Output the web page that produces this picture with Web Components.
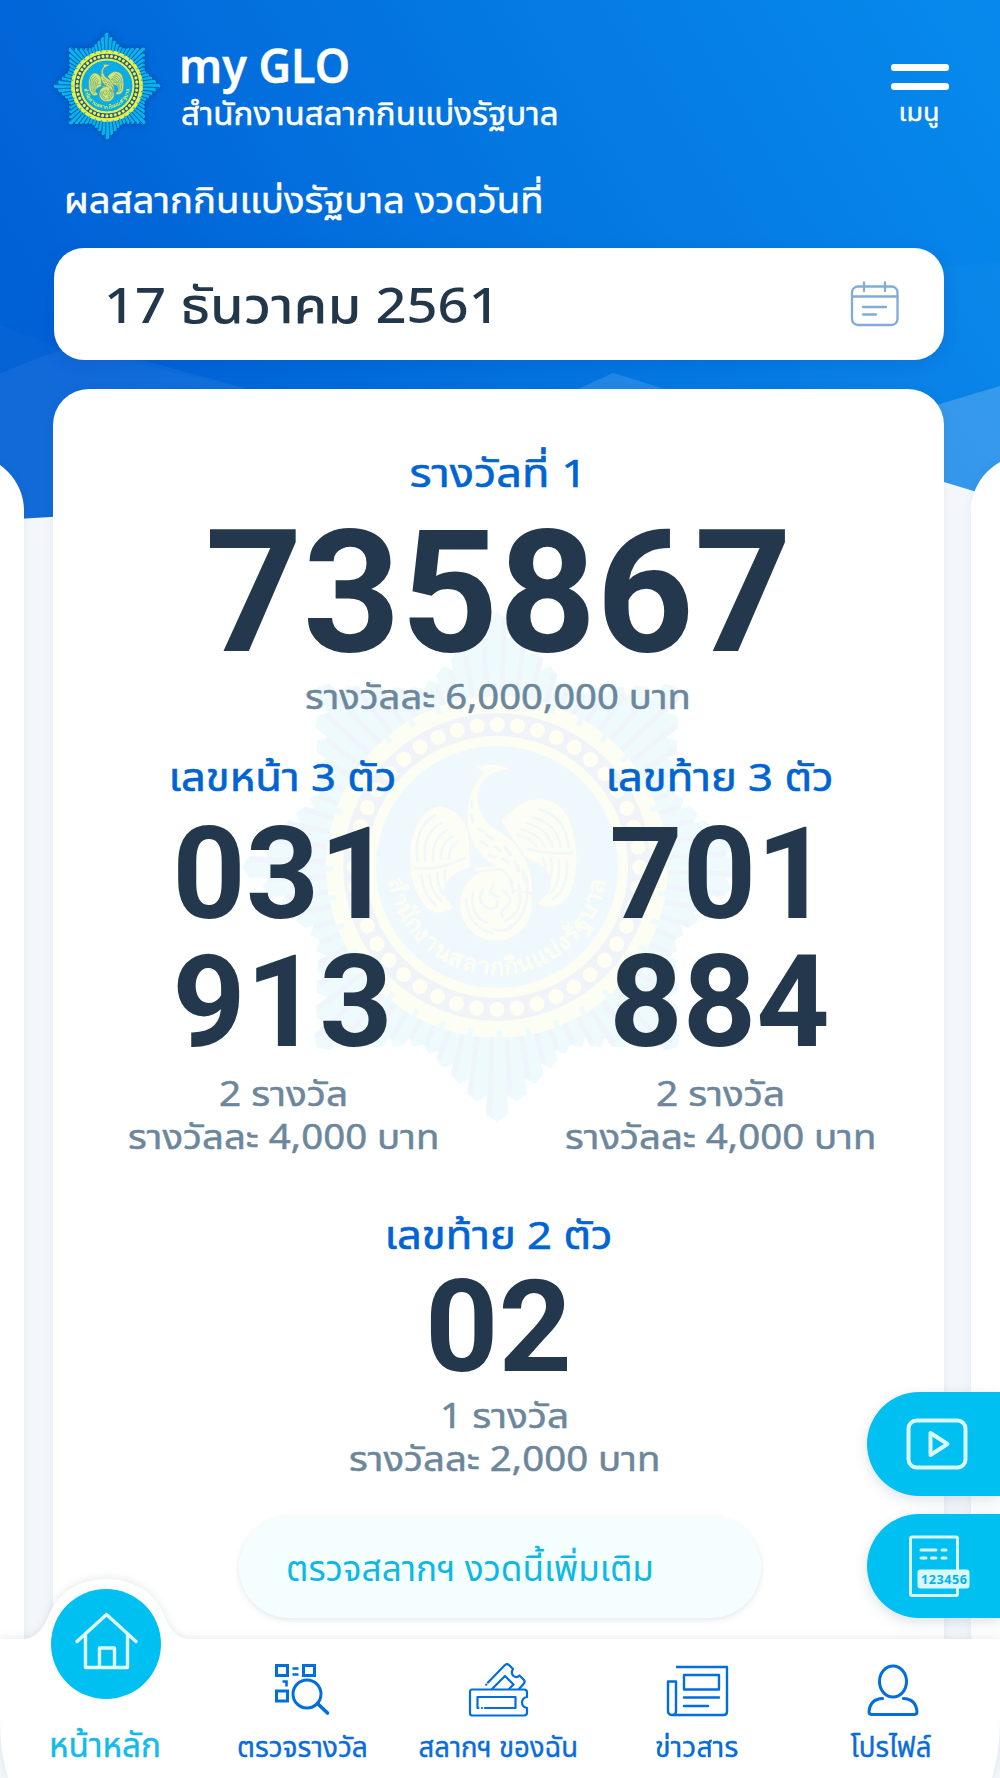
<!DOCTYPE html>
<html lang="th">
<head>
<meta charset="utf-8">
<title>my GLO</title>
<style>
  body {
    margin: 0;
    background: #f3f7fb;
    font-family: "Noto Sans", "Noto Sans Thai", "Open Sans", sans-serif;
    color: #23374b;
  }
</style>
</head>
<body>

<glo-app>
  <glo-header slot="header"></glo-header>
  <glo-date slot="date">
    <fit-text slot="label" size="36" line="49" width="480" shift="-1" bold=".5">ผลสลากกินแบ่งรัฐบาล งวดวันที่</fit-text>
    <fit-text size="49" line="60" width="396" weight="500" shift="-3">17 ธันวาคม 2561</fit-text>
  </glo-date>

  <glo-card>
    <glo-prize class="first" big label="รางวัลที่ 1" label-width="177" numbers="735867"
      notes="รางวัลละ 6,000,000 บาท" widths="386" shift="-1"></glo-prize>
    <glo-prize label="เลขหน้า 3 ตัว" label-width="228" numbers="031,913"
      notes="2 รางวัล|รางวัลละ 4,000 บาท" widths="129|311" shift="1"></glo-prize>
    <glo-prize label="เลขท้าย 3 ตัว" label-width="228" numbers="701,884"
      notes="2 รางวัล|รางวัลละ 4,000 บาท" widths="129|311" shift="1"></glo-prize>
    <glo-prize class="last" label="เลขท้าย 2 ตัว" label-width="228" numbers="02"
      notes="1 รางวัล|รางวัลละ 2,000 บาท" widths="129|311" shift="6"></glo-prize>
    <glo-button slot="action"><fit-text size="35" line="46" width="368" shift="-1">ตรวจสลากฯ งวดนี้เพิ่มเติม</fit-text></glo-button>
  </glo-card>

  <glo-side slot="side"></glo-side>

  <glo-nav slot="nav">
    <glo-tab active icon="home" label="หน้าหลัก" width="112" size="33" shift="-1"></glo-tab>
    <glo-tab icon="scan" label="ตรวจรางวัล" width="131" shift="1"></glo-tab>
    <glo-tab icon="ticket" label="สลากฯ ของฉัน" width="160" shift="-.5"></glo-tab>
    <glo-tab icon="news" label="ข่าวสาร" width="84"></glo-tab>
    <glo-tab icon="user" label="โปรไฟล์" width="81" shift="-1.5"></glo-tab>
  </glo-nav>
</glo-app>

<script>
const ICONS = {
  calendar: `<svg width="50" height="48" viewBox="0 0 50 48" fill="none" stroke="#82abd6" stroke-width="2.3" stroke-linecap="round">
    <rect x="2" y="6.500" width="45.500" height="38.500" rx="6"/>
    <path d="M2 16.500H47.500M14 2.500V11M35 2.500V11M13 27H36M13 34.500H26"/></svg>`,
  home: `<svg width="64" height="60" viewBox="0 0 64 60" fill="none" stroke="#e0faff" stroke-width="3.400" stroke-linecap="round" stroke-linejoin="round">
    <path d="M3 30.500L32.500 3.500L62 30.500M11.500 24.500V56.500H53.500V24.500"/><path d="M25.500 56V37H40.500V56"/></svg>`,
  scan: `<svg width="58" height="56" viewBox="0 0 58 56" fill="none" stroke="#006edc" stroke-width="3">
    <path d="M3.500 5.500H14.500V15.500H3.500ZM30.500 5.500H41.500V15.500H30.500ZM3.500 31H14.500V41H3.500Z"/>
    <path d="M19.500 8.500H25.500M19.500 14.500H25.500M9.500 21.500H13.500V26.500" stroke-width="2.600"/>
    <circle cx="34" cy="34" r="14"/><path d="M44.500 43.500L54.500 53" stroke-width="3.600" stroke-linecap="round"/></svg>`,
  ticket: `<svg width="62" height="58" viewBox="0 0 62 58" fill="none" stroke="#006edc" stroke-width="2.200" stroke-linejoin="round" stroke-linecap="round">
    <path d="M4 29.500H56Q59 29.500 59 32.500V37Q54 38 54 42.500Q54 47 59 48V52.500Q59 55.500 56 55.500H4Q2 55.500 2 53V32Q2 29.500 4 29.500Z"/>
    <path d="M17 48H47.500V37H9.500V48H10.500M14 48H14.100"/>
    <path d="M20 22.500L36.500 5.500Q39 3 41 5L45 9Q42.500 13 45.500 16Q48.500 18.500 51.500 15.500L56 20Q57.500 22 55.500 24L51 29"/>
    <path d="M24 29L37 16L45.500 24.500L41 29M18.300 24.600L18.200 24.700"/></svg>`,
  news: `<svg width="64" height="56" viewBox="0 0 64 56" fill="none" stroke="#006edc" stroke-width="2.400" stroke-linejoin="round">
    <path d="M11 4H62V48.500Q62 52 58.500 52H7Q3 52 3 48V18.500H11V48Q11 52 7 52"/>
    <path d="M19 12H54V26.500H19Z"/><path d="M19 34.500H54M19 43H43" stroke-linecap="round"/></svg>`,
  user: `<svg width="54" height="56" viewBox="0 0 54 56" fill="none" stroke="#006edc" stroke-width="3" stroke-linecap="round">
    <ellipse cx="27" cy="19.500" rx="13.500" ry="15.500"/>
    <path d="M16.500 36.500Q4 37 3 50Q3 52.500 6 52.500H48Q51 52.500 51 50Q50 37 37.500 36.500"/></svg>`,
  play: `<svg width="62" height="52" viewBox="0 0 62 52" fill="none" stroke="#dcf8ff" stroke-width="4" stroke-linejoin="round">
    <rect x="2.500" y="2.500" width="57" height="47" rx="8"/><path d="M24.500 15V37L41.500 26Z"/></svg>`,
  slip: `<svg width="64" height="62" viewBox="0 0 64 62" fill="none" stroke="#dcf8ff" stroke-width="3">
    <rect x="2.500" y="2" width="47" height="58.500" rx="1.500"/>
    <path d="M13 15H28M34 15H38M13 23H18M23.500 23H28M34 23H38" stroke-linecap="round"/>
    <rect x="9.500" y="34.500" width="52" height="19" rx="3" fill="#d8f7ff" stroke="none"/>
    <text x="13" y="48.800" textLength="46" font-family="Noto Sans, sans-serif" font-size="12.500" font-weight="700" fill="#00b4e8" stroke="none">123456</text></svg>`,
}

function define(name, html, init) {
  const template = document.createElement('template')
  template.innerHTML = html
  customElements.define(name, class extends HTMLElement {
    constructor() {
      super()
      this.attachShadow({mode: 'open'}).append(template.content.cloneNode(true))
    }
    connectedCallback() {
      init?.(this, this.shadowRoot)
    }
  })
}

// a line of text stretched to a given width
define('fit-text', `
  <style>
    :host {display: block; white-space: nowrap; flex: none}
    span {display: inline-block; transform-origin: 0 50%}
  </style>
  <span><slot></slot></span>
`, (el, root) => {
  const span = root.querySelector('span')
  const get = (name, fallback) => el.getAttribute(name) ?? fallback
  el.style.fontSize = get('size')+'px'
  el.style.lineHeight = get('line')+'px'
  el.style.height = get('line')+'px'
  el.style.fontWeight = get('weight', 400)
  el.style.webkitTextStroke = get('bold', 0)+'px currentColor'
  const width = +get('width')
  const natural = span.offsetWidth
  el.style.width = width+'px'
  if (natural) span.style.transform = `translateX(${get('shift', 0)}px) scaleX(${width / natural})`
})

// rays of the star: both squares of an octagram, cut into narrow blades
function starRays() {
  const point = (r, deg) => {
    const a = deg * Math.PI / 180
    return (r * Math.sin(a)).toFixed(1)+' '+(-r * Math.cos(a)).toFixed(1)
  }
  let bright = '', dark = ''
  for (let corner = 0; corner < 360; corner += 45) {
    for (let k = -4; k <= 4; k++) {
      const deg = corner + k * 5
      const r = 181 / Math.cos((45 - Math.abs(k) * 5) * Math.PI / 180)
      bright += `M${point(110, deg - 2.6)}L${point(r - 7, deg - 2.6)}L${point(r, deg)}L${point(r - 7, deg + 2.6)}L${point(110, deg + 2.6)}Z`
      dark += `M${point(120, deg + 1.7)}L${point(r - 7, deg + 1.7)}`
    }
  }
  return `<path d="${bright}" fill="#08b4ee"/><path d="${dark}" stroke="#0866b6" stroke-width="5"/>`
}

define('glo-emblem', `
  <style>
    :host {display: block}
    svg {display: block; width: 100%; height: 100%; overflow: visible}
  </style>
  <svg viewBox="-258 -258 516 516" fill="none">
    ${starRays()}
    <circle r="164" fill="#e9ef45"/>
    <circle r="166" stroke="#e9ef45" stroke-width="11" stroke-dasharray="24 5"/>
    <circle r="143" stroke="#155d95" stroke-width="23"/>
    <circle r="143" stroke="#f0f04a" stroke-width="15" stroke-linecap="round" stroke-dasharray="0.1 20.320"/>
    <circle r="124" fill="#08ace8" stroke="#e9ef45" stroke-width="5"/>
    <g stroke-linecap="round">
      <g fill="#d9e468" stroke="#3c86a8" stroke-width="2">
        <path d="M-28 -40C-40 -56 -48 -62 -58 -62C-76 -60 -86 -38 -88 -17C-90 10 -82 30 -70 43C-62 49 -48 47 -43 40L-51 30C-56 18 -48 8 -26 1Z"/>
        <path d="M3 -47C18 -60 24 -69 43 -69C60 -68 68 -60 74 -46C82 -24 82 0 77 20C72 32 66 40 56 41Q46 43 40 36L51 25C56 14 50 6 47 0L27 -10Z"/>
        <circle cx="-1" cy="38" r="37"/>
        <path d="M15 -98Q-4 -108 -22 -100L-14 -95Q-34 -74 -30 -40Q-24 -12 -4 -2L-25 0L-22 5L4 2Q16 10 16 24L36 26Q37 -2 18 -24Q8 -34 -6 -42Q-24 -60 -17 -80Q-8 -96 15 -98Z"/>
      </g>
      <g stroke="#1590bd" stroke-width="2.500">
        <path d="M-80 -6Q-84 -40 -62 -52M-72 -6Q-76 -34 -56 -44M-64 -7Q-66 -28 -50 -37M-56 -8Q-58 -22 -44 -31M-48 -9Q-49 -20 -39 -26M-82 1Q-60 4 -32 -9M-76 8Q-74 28 -62 38M-68 8Q-66 26 -56 34M-60 6Q-60 20 -53 28M-52 4Q-54 12 -50 18"/>
        <path d="M72 -20Q68 -52 42 -58M64 -20Q60 -44 36 -50M56 -20Q52 -38 30 -44M48 -20Q44 -32 24 -38M40 -20Q36 -28 20 -32M76 -14Q54 -12 30 -18M70 -6Q72 22 56 32M62 -7Q64 16 54 26M54 -8Q57 2 53 12M46 -9L49 -1"/>
        <path d="M30 10Q34 48 12 62M22 18Q28 46 8 54M-31 32Q-30 60 -4 67M-24 26Q-28 48 -10 56M-14 22Q-22 36 -8 42Q2 42 0 34M-4 18Q-10 28 2 30M6 24Q18 30 10 40Q2 44 6 50M14 14L16 26M-4 62Q10 66 14 58"/>
        <path d="M-25 -66V-60M-26 -52L-24 -46M-18 -38L-14 -36M-10 -32L-4 -28M-16 -26L-10 -22M-2 -20L4 -16M8 -20L14 -12M-8 -12L-2 -10M6 -8L12 -4M18 -6L22 4M26 4L28 16" stroke-width="3"/>
      </g>
    </g>
    <path id="arc" d="M-109 13A110 110 0 0 0 109 13"/>
    <text font-size="24" font-weight="600" fill="#e9ef45" font-family="Noto Sans, sans-serif">
      <textPath href="#arc" textLength="315">สำนักงานสลากกินแบ่งรัฐบาล</textPath></text>
  </svg>
`)

define('glo-header', `
  <style>
    :host {display: flex; height: 175px; padding: 32px 51px 0 53px; box-sizing: border-box; color: #fff}
    glo-emblem {width: 108px; height: 108px; filter: drop-shadow(0 0 3px #0048a0)}
    .name {flex: 1; padding: 5px 0 0 21px}
    .menu {display: flex; flex-direction: column; align-items: center; gap: 12px; padding-top: 32px; width: 58px}
    i {width: 58px; height: 7px; border-radius: 3px; background: #fff}
    .menu fit-text {margin-top: -6px}
  </style>
  <glo-emblem></glo-emblem>
  <div class="name">
    <fit-text size="46" line="56" width="171" weight="600" shift="-3" bold=".4">my GLO</fit-text>
    <fit-text size="32" line="40" width="378" shift="-1" bold=".5">สำนักงานสลากกินแบ่งรัฐบาล</fit-text>
  </div>
  <div class="menu"><i></i><i></i><fit-text size="25" line="30" width="41" shift="-1.500" bold=".4">เมนู</fit-text></div>
`)

define('glo-date', `
  <style>
    :host {display: block; padding: 0 56px 0 53.500px}
    .label {padding-left: 11px; color: #fff; height: 73px}
    .box {
      display: flex; align-items: center; justify-content: space-between;
      height: 112px; padding: 0 44px 0 53px; box-sizing: border-box;
      border-radius: 30px; background: #fff; box-shadow: 0 4px 14px #0046a833;
    }
    svg {display: block}
  </style>
  <div class="label"><slot name="label"></slot></div>
  <div class="box"><slot></slot>${ICONS.calendar}</div>
`)

define('glo-card', `
  <style>
    :host {
      display: block; position: relative; box-sizing: border-box; padding-top: 58px;
      border-radius: 36px 36px 0 0; background: #fff; box-shadow: 0 0 8px #28507812;
    }
    glo-emblem {position: absolute; left: 187px; top: 221px; width: 514px; height: 514px; opacity: .06}
    .prizes {position: relative; display: grid; grid-template-columns: 437px 437px; padding-left: 11px}
    ::slotted(.first), ::slotted(.last) {grid-column: 1 / 3; margin-right: 5px}
    ::slotted(.first) {margin-bottom: 33px}
    ::slotted(.last) {margin-top: 51px}
    .action {position: relative; display: flex; justify-content: center; padding: 37px 0 0 4px}
  </style>
  <glo-emblem></glo-emblem>
  <div class="prizes"><slot></slot></div>
  <div class="action"><slot name="action"></slot></div>
`)

define('glo-prize', `
  <style>
    :host {display: flex; flex-direction: column; align-items: center}
    fit-text {color: #0064d2}
    .numbers {
      margin: 8.500px 0 6px; color: #23384d;
      font: 700 128px/128px Roboto, sans-serif;
    }
    :host(.last) .numbers {margin: 4px 0 3.500px}
    :host([big]) .numbers {margin: 20.500px 0 7.500px; font-size: 170.500px; line-height: 150px}
    .notes fit-text {color: #6c879c}
    .notes {display: flex; flex-direction: column; align-items: center}
  </style>
  <div class="label"></div>
  <div class="numbers"></div>
  <div class="notes"></div>
`, (el, root) => {
  const get = name => el.getAttribute(name)
  const widths = get('widths').split('|')
  root.querySelector('.label').innerHTML =
    `<fit-text size="39" line="50" width="${get('label-width')}" shift="-.5" bold=".6">${get('label')}</fit-text>`
  root.querySelector('.numbers').innerHTML = get('numbers').split(',').map(n => `<div>${n}</div>`).join('')
  root.querySelector('.notes').innerHTML = get('notes').split('|').map((note, i) =>
    `<fit-text size="34" line="43" width="${widths[i]}" shift="${get('shift')}" bold=".5">${note}</fit-text>`).join('')
})

define('glo-button', `
  <style>
    :host {
      display: flex; align-items: center; width: 522px; height: 101px; padding-left: 48px; box-sizing: border-box;
      border-radius: 51px; background: #f4feff; color: #0cb8e6; box-shadow: 0 2px 6px #1e46641f;
    }
  </style>
  <slot></slot>
`)

define('glo-side', `
  <style>
    :host {display: flex; flex-direction: column; gap: 18.500px}
    div {
      display: flex; align-items: center; width: 133.500px; height: 104px; padding-left: 39px; box-sizing: border-box;
      border-radius: 52px 0 0 52px; background: #00c0f2; box-shadow: 0 4px 14px #1e466426;
    }
    div + div {padding-left: 41px}
  </style>
  <div>${ICONS.play}</div>
  <div>${ICONS.slip}</div>
`)

define('glo-nav', `
  <style>
    :host {display: block; position: relative; height: 139px}
    .shape {position: absolute; left: 0; top: -70px; overflow: visible; filter: drop-shadow(0 -1px 4px #1e46641f)}
    .tabs {position: relative; display: grid; height: 139px; grid-template-columns: 204px 195px 199px 197px 195px}
  </style>
  <svg class="shape" width="1000" height="209" viewBox="0 0 1000 209">
    <path fill="#fff" d="M0 70H22C36 70 43 60 49 46C58 23 80 10 106.500 10S155 23 164 46C170 60 176 70 191 70H1000V150Q1000 185 992 209H8Q0 185 0 150Z"/>
  </svg>
  <div class="tabs"><slot></slot></div>
`)

define('glo-tab', `
  <style>
    :host {display: flex; flex-direction: column; align-items: center; color: #0a6cdc; padding-top: 21px}
    :host([active]) {color: #12bbe8; padding: 0 0 0 7px; margin-top: -50px}
    .icon {display: flex; justify-content: center; align-items: center; height: 58px}
    :host([active]) .icon {width: 110px; height: 110px; border-radius: 50%; background: #00c0f2; margin-bottom: 25px}
    :host([active]) svg {margin-top: -6px}
    :host(:not([active])) .icon {margin-bottom: 7px}
    :host([icon=scan]) svg {margin-top: -2px}
    :host([icon=news]) svg {margin-top: 3px}
    :host([icon=user]) svg {margin-top: 2px}
    svg {display: block}
  </style>
  <div class="icon"></div>
  <div class="label"></div>
`, (el, root) => {
  const get = (name, fallback) => el.getAttribute(name) ?? fallback
  root.querySelector('.icon').innerHTML = ICONS[get('icon')]
  root.querySelector('.label').innerHTML =
    `<fit-text size="${get('size', 28)}" line="42" width="${get('width')}" shift="${get('shift', 0)}" bold=".4">${get('label')}</fit-text>`
})

define('glo-app', `
  <style>
    :host {display: flex; flex-direction: column; position: relative; width: 1000px; height: 1778px; overflow: hidden}
    .sky {position: absolute; left: 0; top: 0}
    header {position: relative}
    main {
      position: relative; flex: 1; min-height: 0; margin-top: 29px;
      display: grid; grid-template: 1290px / 24px 890.500px 29px; column-gap: 29px;
    }
    .peek {margin-top: 66px; background: #fff; box-shadow: 0 0 8px #28507812}
    .left {border-radius: 0 56px 0 0; width: 80px; margin-left: -56px}
    .right {border-radius: 56px 0 0 0; width: 85px; margin-left: -2px}
    aside {position: absolute; right: 0; top: 1391.500px}
  </style>
  <svg class="sky" width="1000" height="530" viewBox="0 0 1000 530">
    <defs>
      <linearGradient id="sky" gradientUnits="userSpaceOnUse" x1="110" y1="430" x2="1000" y2="-110">
        <stop offset="0" stop-color="#0060d6"/><stop offset=".5" stop-color="#0478e1"/><stop offset="1" stop-color="#078cee"/>
      </linearGradient>
    </defs>
    <path fill="url(#sky)" d="M0 0H1000V499L944 482L500 490L0 520Z"/>
    <path fill="#fff" fill-opacity=".02" d="M0 325L53 345L245 388V505L0 520ZM800 278L1000 262V499L800 450Z"/>
    <path fill="#fff" fill-opacity=".05" d="M0 374Q60 346 90 346L245 388V505L0 520Z"/>
    <path fill="#fff" fill-opacity=".13" d="M578 389L613 373L665 389Z"/>
    <path fill="#fff" fill-opacity=".18" d="M900 416L1000 386V499L900 469Z"/>
  </svg>
  <header><slot name="header"></slot><slot name="date"></slot></header>
  <main>
    <div class="peek left"></div>
    <slot></slot>
    <div class="peek right"></div>
  </main>
  <aside><slot name="side"></slot></aside>
  <slot name="nav"></slot>
`)
</script>
</body>
</html>
